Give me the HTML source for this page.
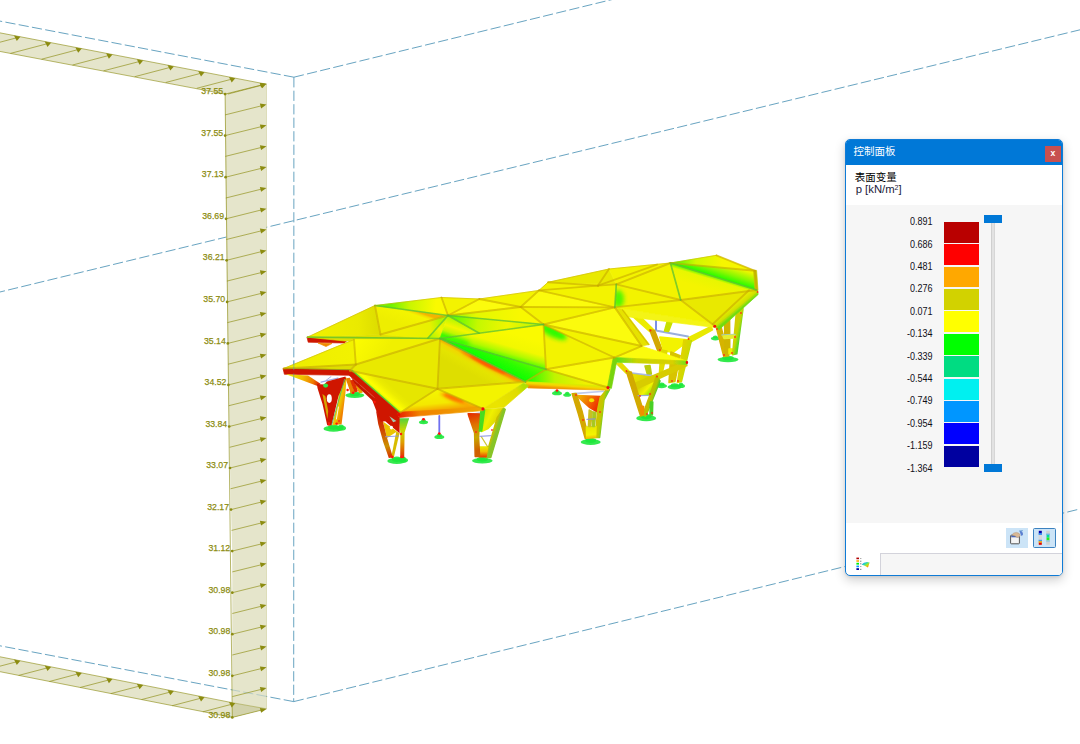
<!DOCTYPE html>
<html lang="zh-CN">
<head>
<meta charset="utf-8">
<title>控制面板</title>
<style>
html,body{margin:0;padding:0;background:#fff;}
body{width:1080px;height:744px;overflow:hidden;position:relative;font-family:"Liberation Sans","Noto Sans CJK SC",sans-serif;}
#scene{position:absolute;left:0;top:0;width:1080px;height:744px;display:block;}
#scene text{font-family:"Liberation Sans","Noto Sans CJK SC",sans-serif;}
#panel{position:absolute;left:845px;top:139px;width:216px;height:435px;border:1px solid #0f7bd6;border-radius:5px;background:#fff;box-shadow:0 4px 11px rgba(0,0,0,.20),0 1px 3px rgba(0,0,0,.08);overflow:hidden;}
#wrap{position:absolute;left:0;top:-1px;width:216px;height:436px;}
#title{position:absolute;left:0;top:0;width:216px;height:26px;background:#0078d7;color:#fff;font-size:10.5px;line-height:27px;}
#title span{position:absolute;left:7.5px;top:-1.2px;}
#close{position:absolute;left:199px;top:7px;width:16px;height:16px;background:#c75050;color:#fff;font-weight:bold;font-size:8.6px;line-height:15.4px;text-align:center;}
#head{position:absolute;left:8.8px;top:31.6px;font-size:10.5px;line-height:12.4px;color:#000;font-weight:400;}
#head .u{color:#1b1b3a;font-size:11.3px;font-weight:400;position:relative;left:0.9px;top:0.4px;}
#head sup{font-size:7px;line-height:0;vertical-align:3.5px;}
#gray{position:absolute;left:0;top:65.5px;width:216px;height:318.5px;background:#f6f6f6;}
.lab{position:absolute;left:20px;width:66.6px;text-align:right;font-size:11.4px;line-height:12px;color:#101018;transform:scaleX(0.79);transform-origin:100% 50%;}
.bar{position:absolute;left:98px;width:35px;height:20.9px;}
#track{position:absolute;left:145.2px;top:82px;width:3.6px;height:248px;background:#e2e2e2;border-left:0.6px solid #cfcfcf;border-right:0.6px solid #d6d6d6;box-sizing:border-box;}
.thumb{position:absolute;left:138.2px;width:18.3px;height:8.3px;background:#0078d7;}
.btn{position:absolute;top:389.3px;height:19.4px;background:#cce4f7;box-sizing:border-box;}
#tabbar{position:absolute;left:34.3px;top:413.5px;width:190px;height:30px;background:#f6f6f6;border:1px solid #d3d3db;box-sizing:border-box;}
</style>
</head>
<body>

<svg id="scene" width="1080" height="744" viewBox="0 0 1080 744">
<defs><filter id="soft" x="-5%" y="-5%" width="110%" height="110%"><feGaussianBlur stdDeviation="0.45"/></filter><filter id="b1_0" x="-30%" y="-200%" width="160%" height="500%"><feGaussianBlur stdDeviation="1.0"/></filter><filter id="b1_6" x="-30%" y="-200%" width="160%" height="500%"><feGaussianBlur stdDeviation="1.6"/></filter><filter id="b2_0" x="-30%" y="-200%" width="160%" height="500%"><feGaussianBlur stdDeviation="2.0"/></filter><filter id="b2_2" x="-30%" y="-200%" width="160%" height="500%"><feGaussianBlur stdDeviation="2.2"/></filter><linearGradient id="gl7" gradientUnits="userSpaceOnUse" x1="732.0" y1="330.0" x2="741.0" y2="332.0"><stop offset="0" stop-color="#d9c800"/><stop offset="0.6" stop-color="#c8d400"/><stop offset="1" stop-color="#58d820"/></linearGradient><linearGradient id="gl6" gradientUnits="userSpaceOnUse" x1="680.0" y1="360.0" x2="689.0" y2="362.0"><stop offset="0" stop-color="#e0d400"/><stop offset="0.7" stop-color="#cfd800"/><stop offset="1" stop-color="#70d820"/></linearGradient><linearGradient id="gl5" gradientUnits="userSpaceOnUse" x1="634.0" y1="378.0" x2="650.0" y2="392.0"><stop offset="0" stop-color="#e8e000"/><stop offset="0.5" stop-color="#d8d400"/><stop offset="0.8" stop-color="#f4f400"/><stop offset="1" stop-color="#a8e800"/></linearGradient><linearGradient id="gl5r" gradientUnits="userSpaceOnUse" x1="648.0" y1="398.0" x2="654.0" y2="400.0"><stop offset="0" stop-color="#c8b800"/><stop offset="0.6" stop-color="#b0c400"/><stop offset="1" stop-color="#50c828"/></linearGradient><linearGradient id="gl4g" gradientUnits="userSpaceOnUse" x1="580.0" y1="397.0" x2="598.0" y2="408.0"><stop offset="0" stop-color="#f0a800"/><stop offset="0.45" stop-color="#f07000"/><stop offset="1" stop-color="#ee2800"/></linearGradient><linearGradient id="gl4r" gradientUnits="userSpaceOnUse" x1="597.0" y1="415.0" x2="603.6" y2="416.0"><stop offset="0" stop-color="#d0c000"/><stop offset="0.6" stop-color="#c0c800"/><stop offset="1" stop-color="#78cc20"/></linearGradient><linearGradient id="gl4b" gradientUnits="userSpaceOnUse" x1="590.0" y1="427.0" x2="591.0" y2="438.0"><stop offset="0" stop-color="#e8e800"/><stop offset="0.7" stop-color="#f4f400"/><stop offset="1" stop-color="#f0c000"/></linearGradient><linearGradient id="gl3g" gradientUnits="userSpaceOnUse" x1="484.0" y1="412.0" x2="500.0" y2="420.0"><stop offset="0" stop-color="#d0e400"/><stop offset="0.4" stop-color="#f0f000"/><stop offset="1" stop-color="#d8d000"/></linearGradient><linearGradient id="gl3r" gradientUnits="userSpaceOnUse" x1="490.0" y1="430.0" x2="496.0" y2="432.0"><stop offset="0" stop-color="#d4b000"/><stop offset="0.55" stop-color="#c4c000"/><stop offset="1" stop-color="#88c428"/></linearGradient><linearGradient id="gl3b" gradientUnits="userSpaceOnUse" x1="483.0" y1="447.0" x2="483.0" y2="457.0"><stop offset="0" stop-color="#e8e800"/><stop offset="0.45" stop-color="#f0c000"/><stop offset="1" stop-color="#e84000"/></linearGradient><linearGradient id="gl3a" gradientUnits="userSpaceOnUse" x1="470.0" y1="414.0" x2="479.0" y2="450.0"><stop offset="0" stop-color="#e43000"/><stop offset="0.3" stop-color="#e07000"/><stop offset="0.65" stop-color="#c8a800"/><stop offset="1" stop-color="#d06000"/></linearGradient><linearGradient id="gU1" gradientUnits="userSpaceOnUse" x1="307.5" y1="337.2" x2="380.5" y2="334.5"><stop offset="0" stop-color="#f2f200"/><stop offset="0.7" stop-color="#eaea00"/><stop offset="1" stop-color="#dcdc00"/></linearGradient><linearGradient id="gU2" gradientUnits="userSpaceOnUse" x1="410.0" y1="309.0" x2="404.0" y2="326.0"><stop offset="0" stop-color="#f4b400"/><stop offset="0.1" stop-color="#f4dc00"/><stop offset="0.22" stop-color="#f4f400"/><stop offset="1" stop-color="#eeee00"/></linearGradient><linearGradient id="gU3" gradientUnits="userSpaceOnUse" x1="392.0" y1="300.0" x2="436.0" y2="304.0"><stop offset="0" stop-color="#70f400"/><stop offset="0.4" stop-color="#c8f600"/><stop offset="1" stop-color="#fafa00"/></linearGradient><linearGradient id="gU4" gradientUnits="userSpaceOnUse" x1="405.0" y1="330.0" x2="440.0" y2="322.0"><stop offset="0" stop-color="#f0f000"/><stop offset="0.7" stop-color="#e8f000"/><stop offset="1" stop-color="#b0f400"/></linearGradient><linearGradient id="gU4b" gradientUnits="userSpaceOnUse" x1="430.0" y1="335.0" x2="446.0" y2="320.0"><stop offset="0" stop-color="#b8f400"/><stop offset="0.5" stop-color="#f4f400"/><stop offset="1" stop-color="#d0f400"/></linearGradient><linearGradient id="gU7" gradientUnits="userSpaceOnUse" x1="452.0" y1="318.0" x2="520.0" y2="318.0"><stop offset="0" stop-color="#90f600"/><stop offset="0.35" stop-color="#e4f800"/><stop offset="1" stop-color="#f8f800"/></linearGradient><linearGradient id="gU8" gradientUnits="userSpaceOnUse" x1="456.0" y1="318.0" x2="530.0" y2="328.0"><stop offset="0" stop-color="#68fa00"/><stop offset="0.3" stop-color="#c4f800"/><stop offset="0.7" stop-color="#f0f600"/><stop offset="1" stop-color="#c8f600"/></linearGradient><linearGradient id="gU9" gradientUnits="userSpaceOnUse" x1="458.0" y1="320.0" x2="452.0" y2="338.0"><stop offset="0" stop-color="#b0f800"/><stop offset="0.45" stop-color="#f4f600"/><stop offset="0.75" stop-color="#c0f600"/><stop offset="1" stop-color="#40fa00"/></linearGradient><linearGradient id="gR1" gradientUnits="userSpaceOnUse" x1="674.0" y1="263.0" x2="722.0" y2="264.0"><stop offset="0" stop-color="#48f800"/><stop offset="0.45" stop-color="#d0f800"/><stop offset="1" stop-color="#f6f600"/></linearGradient><linearGradient id="gR2" gradientUnits="userSpaceOnUse" x1="720.0" y1="278.6" x2="724.6" y2="264.0"><stop offset="0" stop-color="#20fc00"/><stop offset="0.45" stop-color="#88f800"/><stop offset="1" stop-color="#f0f600"/></linearGradient><linearGradient id="gR3" gradientUnits="userSpaceOnUse" x1="720.0" y1="278.6" x2="716.0" y2="292.0"><stop offset="0" stop-color="#70f800"/><stop offset="0.22" stop-color="#e8f600"/><stop offset="1" stop-color="#f4f400"/></linearGradient><clipPath id="cp1"><polygon points="616.3,284.4 680.7,300.0 614.8,307.4"/></clipPath><linearGradient id="gRb" gradientUnits="userSpaceOnUse" x1="732.0" y1="306.0" x2="737.0" y2="312.0"><stop offset="0" stop-color="#e8ec00"/><stop offset="0.6" stop-color="#d0e000"/><stop offset="1" stop-color="#70dc10"/></linearGradient><linearGradient id="gMu" gradientUnits="userSpaceOnUse" x1="615.0" y1="360.0" x2="687.0" y2="362.0"><stop offset="0" stop-color="#50e020"/><stop offset="0.3" stop-color="#c8d400"/><stop offset="0.8" stop-color="#d8d000"/><stop offset="1" stop-color="#70e020"/></linearGradient><linearGradient id="gG1" gradientUnits="userSpaceOnUse" x1="490.0" y1="353.0" x2="497.0" y2="329.0"><stop offset="0" stop-color="#58fc00"/><stop offset="0.2" stop-color="#b0fa00"/><stop offset="0.48" stop-color="#f2f800"/><stop offset="1" stop-color="#fafa00"/></linearGradient><clipPath id="cp2"><polygon points="440.0,338.5 543.5,324.5 546.0,369.3"/></clipPath><linearGradient id="gG2" gradientUnits="userSpaceOnUse" x1="497.0" y1="368.0" x2="505.0" y2="352.0"><stop offset="0" stop-color="#08ff00"/><stop offset="0.6" stop-color="#30fd00"/><stop offset="1" stop-color="#58fb00"/></linearGradient><clipPath id="cp3"><polygon points="543.5,324.5 614.3,357.5 546.0,369.3"/></clipPath><linearGradient id="gG5" gradientUnits="userSpaceOnUse" x1="530.0" y1="380.0" x2="585.0" y2="378.0"><stop offset="0" stop-color="#30fa00"/><stop offset="0.45" stop-color="#c0f400"/><stop offset="1" stop-color="#f0f000"/></linearGradient><linearGradient id="gGf" gradientUnits="userSpaceOnUse" x1="560.0" y1="383.0" x2="559.6" y2="388.6"><stop offset="0" stop-color="#d8ec00"/><stop offset="0.45" stop-color="#f4d800"/><stop offset="1" stop-color="#f09000"/></linearGradient><linearGradient id="gF1" gradientUnits="userSpaceOnUse" x1="300.0" y1="362.0" x2="352.0" y2="352.0"><stop offset="0" stop-color="#eeee00"/><stop offset="1" stop-color="#f2f200"/></linearGradient><linearGradient id="gF3" gradientUnits="userSpaceOnUse" x1="354.0" y1="342.0" x2="380.0" y2="360.0"><stop offset="0" stop-color="#fcfc00"/><stop offset="1" stop-color="#f0f000"/></linearGradient><linearGradient id="gF5" gradientUnits="userSpaceOnUse" x1="490.0" y1="365.0" x2="482.0" y2="380.0"><stop offset="0" stop-color="#f0a000"/><stop offset="0.22" stop-color="#f0d800"/><stop offset="0.5" stop-color="#e4e400"/><stop offset="1" stop-color="#dede00"/></linearGradient><clipPath id="cp4"><polygon points="440.0,338.5 525.5,381.8 437.5,388.8"/></clipPath><clipPath id="cp5"><polygon points="440.0,338.5 525.5,381.8 437.5,388.8"/></clipPath><linearGradient id="gF7" gradientUnits="userSpaceOnUse" x1="440.0" y1="392.0" x2="442.0" y2="412.0"><stop offset="0" stop-color="#f4f400"/><stop offset="0.55" stop-color="#f4e800"/><stop offset="1" stop-color="#f49000"/></linearGradient><linearGradient id="gF8" gradientUnits="userSpaceOnUse" x1="374.0" y1="392.0" x2="384.5" y2="380.0"><stop offset="0" stop-color="#58ec00"/><stop offset="0.1" stop-color="#d0fa00"/><stop offset="0.3" stop-color="#ffff00"/><stop offset="0.7" stop-color="#ecec00"/><stop offset="1" stop-color="#e6e600"/></linearGradient><clipPath id="cp6"><polygon points="483.0,408.8 398.0,414.0 437.5,388.8"/></clipPath><clipPath id="cp7"><polygon points="483.0,408.8 398.0,414.0 437.5,388.8"/></clipPath><linearGradient id="gFu" gradientUnits="userSpaceOnUse" x1="495.0" y1="400.0" x2="522.0" y2="384.0"><stop offset="0" stop-color="#eae400"/><stop offset="0.75" stop-color="#e0dc00"/><stop offset="1" stop-color="#b0e000"/></linearGradient><linearGradient id="gFf" gradientUnits="userSpaceOnUse" x1="398.0" y1="414.0" x2="483.0" y2="409.0"><stop offset="0" stop-color="#e82000"/><stop offset="0.25" stop-color="#f08000"/><stop offset="1" stop-color="#f0a800"/></linearGradient><linearGradient id="gl1w" gradientUnits="userSpaceOnUse" x1="288.0" y1="375.0" x2="319.0" y2="385.0"><stop offset="0" stop-color="#ecec00"/><stop offset="0.45" stop-color="#f0c000"/><stop offset="0.8" stop-color="#f07800"/><stop offset="1" stop-color="#d82000"/></linearGradient><linearGradient id="gl1b" gradientUnits="userSpaceOnUse" x1="334.0" y1="400.0" x2="345.0" y2="403.0"><stop offset="0" stop-color="#40c060"/><stop offset="0.3" stop-color="#d8e000"/><stop offset="0.6" stop-color="#f0c000"/><stop offset="1" stop-color="#f08000"/></linearGradient><linearGradient id="gl2b" gradientUnits="userSpaceOnUse" x1="402.0" y1="418.0" x2="402.0" y2="458.0"><stop offset="0" stop-color="#50d040"/><stop offset="0.3" stop-color="#c8d800"/><stop offset="0.6" stop-color="#e0a000"/><stop offset="1" stop-color="#e03000"/></linearGradient><linearGradient id="gl2a" gradientUnits="userSpaceOnUse" x1="380.0" y1="412.0" x2="391.0" y2="457.0"><stop offset="0" stop-color="#cf1800"/><stop offset="0.4" stop-color="#d04800"/><stop offset="0.75" stop-color="#cc9000"/><stop offset="1" stop-color="#d83000"/></linearGradient></defs>
<g id="boxlines"><line x1="293.9" y1="77.2" x2="-10.0" y2="19.2" stroke="#4f95b7" stroke-width="1.0" stroke-dasharray="10.2 3.3" opacity="0.85"/><line x1="293.9" y1="77.2" x2="620.0" y2="-2.4" stroke="#4f95b7" stroke-width="1.0" stroke-dasharray="10.2 3.3" opacity="0.85"/><line x1="293.9" y1="77.2" x2="293.7" y2="701.6" stroke="#4f95b7" stroke-width="1.0" stroke-dasharray="10.2 3.3" opacity="0.85"/><line x1="293.7" y1="701.6" x2="-10.0" y2="643.9" stroke="#4f95b7" stroke-width="1.0" stroke-dasharray="10.2 3.3" opacity="0.85"/><line x1="293.7" y1="701.6" x2="1090.0" y2="506.5" stroke="#4f95b7" stroke-width="1.0" stroke-dasharray="10.2 3.3" opacity="0.85"/><line x1="-5.0" y1="293.2" x2="1085.0" y2="28.6" stroke="#4f95b7" stroke-width="1.0" stroke-dasharray="10.2 3.3" opacity="0.85"/></g>
<g id="load"><polygon points="225.1,94.1 225.1,135.6 225.6,177.2 226.0,218.8 226.6,260.3 227.1,301.9 227.8,343.4 228.4,384.9 229.2,426.5 230.0,468.0 231.0,509.6 232.2,551.1 232.3,592.7 232.3,634.2 232.3,675.8 232.3,717.4 266.5,708.9 266.5,667.3 266.5,625.8 266.5,584.2 266.5,542.6 266.5,500.8 266.5,459.0 266.5,417.2 266.5,375.5 266.5,333.8 266.5,292.1 266.5,250.4 266.5,208.7 266.5,167.0 266.5,125.3 266.5,83.8" fill="#e5e5cb" stroke="none"/><polygon points="-5.0,31.9 266.5,84.2 225.1,94.1 -5.0,50.5" fill="#e5e5cb"/><polygon points="-5.0,655.8 232.2,702.7 266.5,708.8 232.2,717.4 -5.0,670.7" fill="#e5e5cb"/><polygon points="232.2,702.7 266.5,708.8 232.2,717.4" fill="#d2d2ab"/></g>
<line x1="266.5" y1="696.4" x2="232.2" y2="689.9" stroke="#4f95b7" stroke-width="1.0" stroke-dasharray="10.2 3.3" opacity="0.30"/>
<g id="loadlines"><line x1="225.1" y1="94.1" x2="232.3" y2="717.4" stroke="#8c8c10" stroke-width="1.00" opacity="0.62"/><line x1="266.5" y1="83.8" x2="266.5" y2="708.9" stroke="#8c8c10" stroke-width="1.00" opacity="0.20"/><line x1="-5.0" y1="31.9" x2="266.5" y2="84.2" stroke="#8c8c10" stroke-width="0.80" opacity="0.75"/><line x1="-5.0" y1="50.5" x2="225.1" y2="94.1" stroke="#8c8c10" stroke-width="0.80" opacity="0.75"/><line x1="-5.0" y1="655.8" x2="232.2" y2="702.7" stroke="#8c8c10" stroke-width="0.80" opacity="0.75"/><line x1="232.2" y1="702.7" x2="266.5" y2="708.8" stroke="#8c8c10" stroke-width="0.80" opacity="0.50"/><line x1="-5.0" y1="670.7" x2="232.2" y2="717.4" stroke="#8c8c10" stroke-width="0.80" opacity="0.75"/><line x1="225.1" y1="94.1" x2="263.5" y2="84.5" stroke="#8c8c10" stroke-width="0.85" opacity="0.75"/><polygon points="266.5,83.8 261.1,87.7 259.9,82.9" fill="#8c8c10"/><circle cx="225.1" cy="94.1" r="1.35" fill="#8c8c10"/><line x1="225.1" y1="114.9" x2="263.5" y2="105.3" stroke="#8c8c10" stroke-width="0.85" opacity="0.75"/><polygon points="266.5,104.6 261.1,108.5 259.9,103.6" fill="#8c8c10"/><line x1="225.1" y1="135.6" x2="263.5" y2="126.1" stroke="#8c8c10" stroke-width="0.85" opacity="0.75"/><polygon points="266.5,125.3 261.1,129.3 259.9,124.4" fill="#8c8c10"/><circle cx="225.1" cy="135.6" r="1.35" fill="#8c8c10"/><line x1="225.3" y1="156.4" x2="263.5" y2="146.9" stroke="#8c8c10" stroke-width="0.85" opacity="0.75"/><polygon points="266.5,146.2 261.1,150.1 259.9,145.3" fill="#8c8c10"/><line x1="225.6" y1="177.2" x2="263.5" y2="167.8" stroke="#8c8c10" stroke-width="0.85" opacity="0.75"/><polygon points="266.5,167.0 261.1,170.9 259.9,166.1" fill="#8c8c10"/><circle cx="225.6" cy="177.2" r="1.35" fill="#8c8c10"/><line x1="225.8" y1="198.0" x2="263.5" y2="188.6" stroke="#8c8c10" stroke-width="0.85" opacity="0.75"/><polygon points="266.5,187.9 261.1,191.8 259.9,186.9" fill="#8c8c10"/><line x1="226.0" y1="218.8" x2="263.5" y2="209.4" stroke="#8c8c10" stroke-width="0.85" opacity="0.75"/><polygon points="266.5,208.7 261.1,212.6 259.9,207.8" fill="#8c8c10"/><circle cx="226.0" cy="218.8" r="1.35" fill="#8c8c10"/><line x1="226.3" y1="239.5" x2="263.5" y2="230.3" stroke="#8c8c10" stroke-width="0.85" opacity="0.75"/><polygon points="266.5,229.5 261.1,233.4 259.9,228.6" fill="#8c8c10"/><line x1="226.6" y1="260.3" x2="263.5" y2="251.1" stroke="#8c8c10" stroke-width="0.85" opacity="0.75"/><polygon points="266.5,250.4 261.1,254.3 259.9,249.4" fill="#8c8c10"/><circle cx="226.6" cy="260.3" r="1.35" fill="#8c8c10"/><line x1="226.9" y1="281.1" x2="263.5" y2="272.0" stroke="#8c8c10" stroke-width="0.85" opacity="0.75"/><polygon points="266.5,271.2 261.1,275.1 259.9,270.3" fill="#8c8c10"/><line x1="227.1" y1="301.9" x2="263.5" y2="292.8" stroke="#8c8c10" stroke-width="0.85" opacity="0.75"/><polygon points="266.5,292.1 261.1,296.0 259.9,291.1" fill="#8c8c10"/><circle cx="227.1" cy="301.9" r="1.35" fill="#8c8c10"/><line x1="227.4" y1="322.6" x2="263.5" y2="313.7" stroke="#8c8c10" stroke-width="0.85" opacity="0.75"/><polygon points="266.5,312.9 261.1,316.8 259.9,312.0" fill="#8c8c10"/><line x1="227.8" y1="343.4" x2="263.5" y2="334.5" stroke="#8c8c10" stroke-width="0.85" opacity="0.75"/><polygon points="266.5,333.8 261.1,337.7 259.9,332.8" fill="#8c8c10"/><circle cx="227.8" cy="343.4" r="1.35" fill="#8c8c10"/><line x1="228.1" y1="364.2" x2="263.5" y2="355.4" stroke="#8c8c10" stroke-width="0.85" opacity="0.75"/><polygon points="266.5,354.6 261.1,358.5 259.9,353.7" fill="#8c8c10"/><line x1="228.4" y1="384.9" x2="263.5" y2="376.2" stroke="#8c8c10" stroke-width="0.85" opacity="0.75"/><polygon points="266.5,375.5 261.1,379.4 259.9,374.6" fill="#8c8c10"/><circle cx="228.4" cy="384.9" r="1.35" fill="#8c8c10"/><line x1="228.8" y1="405.7" x2="263.5" y2="397.1" stroke="#8c8c10" stroke-width="0.85" opacity="0.75"/><polygon points="266.5,396.3 261.1,400.3 259.9,395.4" fill="#8c8c10"/><line x1="229.2" y1="426.5" x2="263.5" y2="418.0" stroke="#8c8c10" stroke-width="0.85" opacity="0.75"/><polygon points="266.5,417.2 261.1,421.1 259.9,416.3" fill="#8c8c10"/><circle cx="229.2" cy="426.5" r="1.35" fill="#8c8c10"/><line x1="229.6" y1="447.3" x2="263.5" y2="438.8" stroke="#8c8c10" stroke-width="0.85" opacity="0.75"/><polygon points="266.5,438.1 261.1,442.0 259.9,437.2" fill="#8c8c10"/><line x1="230.0" y1="468.0" x2="263.5" y2="459.7" stroke="#8c8c10" stroke-width="0.85" opacity="0.75"/><polygon points="266.5,459.0 261.1,462.9 259.9,458.0" fill="#8c8c10"/><circle cx="230.0" cy="468.0" r="1.35" fill="#8c8c10"/><line x1="230.5" y1="488.8" x2="263.5" y2="480.6" stroke="#8c8c10" stroke-width="0.85" opacity="0.75"/><polygon points="266.5,479.9 261.1,483.8 259.9,478.9" fill="#8c8c10"/><line x1="231.0" y1="509.6" x2="263.5" y2="501.5" stroke="#8c8c10" stroke-width="0.85" opacity="0.75"/><polygon points="266.5,500.8 261.1,504.7 259.9,499.8" fill="#8c8c10"/><circle cx="231.0" cy="509.6" r="1.35" fill="#8c8c10"/><line x1="231.6" y1="530.4" x2="263.5" y2="522.4" stroke="#8c8c10" stroke-width="0.85" opacity="0.75"/><polygon points="266.5,521.7 261.1,525.6 259.9,520.8" fill="#8c8c10"/><line x1="232.2" y1="551.1" x2="263.5" y2="543.4" stroke="#8c8c10" stroke-width="0.85" opacity="0.75"/><polygon points="266.5,542.6 261.1,546.5 259.9,541.7" fill="#8c8c10"/><circle cx="232.2" cy="551.1" r="1.35" fill="#8c8c10"/><line x1="232.3" y1="571.9" x2="263.5" y2="564.2" stroke="#8c8c10" stroke-width="0.85" opacity="0.75"/><polygon points="266.5,563.4 261.1,567.3 259.9,562.5" fill="#8c8c10"/><line x1="232.3" y1="592.7" x2="263.5" y2="584.9" stroke="#8c8c10" stroke-width="0.85" opacity="0.75"/><polygon points="266.5,584.2 261.1,588.1 259.9,583.3" fill="#8c8c10"/><circle cx="232.3" cy="592.7" r="1.35" fill="#8c8c10"/><line x1="232.3" y1="613.5" x2="263.5" y2="605.7" stroke="#8c8c10" stroke-width="0.85" opacity="0.75"/><polygon points="266.5,605.0 261.1,608.9 259.9,604.0" fill="#8c8c10"/><line x1="232.3" y1="634.2" x2="263.5" y2="626.5" stroke="#8c8c10" stroke-width="0.85" opacity="0.75"/><polygon points="266.5,625.8 261.1,629.7 259.9,624.8" fill="#8c8c10"/><circle cx="232.3" cy="634.2" r="1.35" fill="#8c8c10"/><line x1="232.3" y1="655.0" x2="263.5" y2="647.3" stroke="#8c8c10" stroke-width="0.85" opacity="0.75"/><polygon points="266.5,646.5 261.1,650.5 259.9,645.6" fill="#8c8c10"/><line x1="232.3" y1="675.8" x2="263.5" y2="668.0" stroke="#8c8c10" stroke-width="0.85" opacity="0.75"/><polygon points="266.5,667.3 261.1,671.2 259.9,666.4" fill="#8c8c10"/><circle cx="232.3" cy="675.8" r="1.35" fill="#8c8c10"/><line x1="232.3" y1="696.6" x2="263.5" y2="688.8" stroke="#8c8c10" stroke-width="0.85" opacity="0.75"/><polygon points="266.5,688.1 261.1,692.0 259.9,687.1" fill="#8c8c10"/><line x1="232.3" y1="717.4" x2="263.5" y2="709.6" stroke="#8c8c10" stroke-width="0.85" opacity="0.75"/><polygon points="266.5,708.9 261.1,712.8 259.9,707.9" fill="#8c8c10"/><circle cx="232.3" cy="717.4" r="1.35" fill="#8c8c10"/><line x1="-51.6" y1="41.7" x2="-13.3" y2="31.7" stroke="#8c8c10" stroke-width="0.80" opacity="0.80"/><polygon points="-10.3,30.9 -16.7,29.7 -13.9,35.1" fill="#8c8c10"/><line x1="-20.5" y1="47.6" x2="17.4" y2="37.6" stroke="#8c8c10" stroke-width="0.80" opacity="0.80"/><polygon points="20.4,36.8 14.0,35.6 16.8,41.0" fill="#8c8c10"/><line x1="10.5" y1="53.4" x2="48.1" y2="43.5" stroke="#8c8c10" stroke-width="0.80" opacity="0.80"/><polygon points="51.1,42.7 44.7,41.5 47.5,46.9" fill="#8c8c10"/><line x1="41.6" y1="59.2" x2="78.8" y2="49.4" stroke="#8c8c10" stroke-width="0.80" opacity="0.80"/><polygon points="81.8,48.6 75.4,47.4 78.2,52.8" fill="#8c8c10"/><line x1="72.6" y1="65.0" x2="109.5" y2="55.3" stroke="#8c8c10" stroke-width="0.80" opacity="0.80"/><polygon points="112.5,54.6 106.1,53.3 108.9,58.8" fill="#8c8c10"/><line x1="103.6" y1="70.8" x2="140.2" y2="61.3" stroke="#8c8c10" stroke-width="0.80" opacity="0.80"/><polygon points="143.2,60.5 136.8,59.2 139.6,64.7" fill="#8c8c10"/><line x1="134.7" y1="76.7" x2="170.9" y2="67.2" stroke="#8c8c10" stroke-width="0.80" opacity="0.80"/><polygon points="173.9,66.4 167.5,65.1 170.3,70.6" fill="#8c8c10"/><line x1="165.7" y1="82.5" x2="201.6" y2="73.1" stroke="#8c8c10" stroke-width="0.80" opacity="0.80"/><polygon points="204.6,72.3 198.2,71.0 201.0,76.5" fill="#8c8c10"/><line x1="196.8" y1="88.3" x2="232.3" y2="79.0" stroke="#8c8c10" stroke-width="0.80" opacity="0.80"/><polygon points="235.3,78.2 228.9,76.9 231.7,82.4" fill="#8c8c10"/><line x1="227.8" y1="94.1" x2="263.0" y2="84.9" stroke="#8c8c10" stroke-width="0.80" opacity="0.80"/><polygon points="266.0,84.1 259.6,82.9 262.4,88.3" fill="#8c8c10"/><line x1="-42.7" y1="663.3" x2="-13.3" y2="655.6" stroke="#8c8c10" stroke-width="0.80" opacity="0.80"/><polygon points="-10.3,654.8 -16.7,653.5 -13.9,659.0" fill="#8c8c10"/><line x1="-12.0" y1="669.3" x2="17.4" y2="661.6" stroke="#8c8c10" stroke-width="0.80" opacity="0.80"/><polygon points="20.4,660.8 14.0,659.6 16.8,665.0" fill="#8c8c10"/><line x1="18.7" y1="675.4" x2="48.1" y2="667.7" stroke="#8c8c10" stroke-width="0.80" opacity="0.80"/><polygon points="51.1,666.9 44.7,665.6 47.5,671.1" fill="#8c8c10"/><line x1="49.4" y1="681.5" x2="78.8" y2="673.7" stroke="#8c8c10" stroke-width="0.80" opacity="0.80"/><polygon points="81.8,673.0 75.4,671.7 78.2,677.2" fill="#8c8c10"/><line x1="80.1" y1="687.5" x2="109.5" y2="679.8" stroke="#8c8c10" stroke-width="0.80" opacity="0.80"/><polygon points="112.5,679.0 106.1,677.8 108.9,683.2" fill="#8c8c10"/><line x1="110.8" y1="693.6" x2="140.2" y2="685.9" stroke="#8c8c10" stroke-width="0.80" opacity="0.80"/><polygon points="143.2,685.1 136.8,683.8 139.6,689.3" fill="#8c8c10"/><line x1="141.5" y1="699.6" x2="170.9" y2="691.9" stroke="#8c8c10" stroke-width="0.80" opacity="0.80"/><polygon points="173.9,691.1 167.5,689.9 170.3,695.3" fill="#8c8c10"/><line x1="172.2" y1="705.7" x2="201.6" y2="698.0" stroke="#8c8c10" stroke-width="0.80" opacity="0.80"/><polygon points="204.6,697.2 198.2,696.0 201.0,701.4" fill="#8c8c10"/><line x1="202.9" y1="711.8" x2="232.3" y2="704.1" stroke="#8c8c10" stroke-width="0.80" opacity="0.80"/><polygon points="235.3,703.3 228.9,702.0 231.7,707.5" fill="#8c8c10"/></g>
<g id="loadlabels" font-size="9.9" fill="#8c8c10" stroke="#8c8c10" stroke-width="0.25"><text x="201.3" y="94.2" textLength="21.8" lengthAdjust="spacingAndGlyphs">37.55</text><text x="201.3" y="135.7" textLength="21.8" lengthAdjust="spacingAndGlyphs">37.55</text><text x="201.8" y="177.3" textLength="21.8" lengthAdjust="spacingAndGlyphs">37.13</text><text x="202.2" y="218.8" textLength="21.8" lengthAdjust="spacingAndGlyphs">36.69</text><text x="202.8" y="260.4" textLength="21.8" lengthAdjust="spacingAndGlyphs">36.21</text><text x="203.3" y="302.0" textLength="21.8" lengthAdjust="spacingAndGlyphs">35.70</text><text x="204.0" y="343.5" textLength="21.8" lengthAdjust="spacingAndGlyphs">35.14</text><text x="204.6" y="385.0" textLength="21.8" lengthAdjust="spacingAndGlyphs">34.52</text><text x="205.4" y="426.6" textLength="21.8" lengthAdjust="spacingAndGlyphs">33.84</text><text x="206.2" y="468.1" textLength="21.8" lengthAdjust="spacingAndGlyphs">33.07</text><text x="207.2" y="509.7" textLength="21.8" lengthAdjust="spacingAndGlyphs">32.17</text><text x="208.4" y="551.2" textLength="21.8" lengthAdjust="spacingAndGlyphs">31.12</text><text x="208.5" y="592.8" textLength="21.8" lengthAdjust="spacingAndGlyphs">30.98</text><text x="208.5" y="634.4" textLength="21.8" lengthAdjust="spacingAndGlyphs">30.98</text><text x="208.5" y="675.9" textLength="21.8" lengthAdjust="spacingAndGlyphs">30.98</text><text x="208.5" y="717.5" textLength="21.8" lengthAdjust="spacingAndGlyphs">30.98</text></g>
<g id="model" filter="url(#soft)"><ellipse cx="728.0" cy="359.6" rx="10.5" ry="2.6" fill="#1fe83c" opacity="0.90"/><ellipse cx="728.0" cy="358.0" rx="5.8" ry="2.3" fill="#1fe83c" opacity="0.90"/><ellipse cx="715.4" cy="338.6" rx="4.5" ry="1.8" fill="#1fe83c" opacity="0.90"/><ellipse cx="715.4" cy="337.0" rx="2.5" ry="1.6" fill="#1fe83c" opacity="0.90"/><polygon points="716.4,327.8 721.0,326.9 728.8,355.7 723.8,356.6" fill="#d6b400" stroke="#d6b400" stroke-width="1.5" stroke-linejoin="round"/><polygon points="724.6,322.3 729.6,318.4 729.8,353.8 725.0,353.8" fill="#d0b400" stroke="#d0b400" stroke-width="1.5" stroke-linejoin="round"/><polygon points="729.0,349.0 734.0,349.0 733.6,353.8 729.0,353.8" fill="#f0f000" stroke="#f0f000" stroke-width="1.5" stroke-linejoin="round"/><polygon points="736.6,309.5 743.0,308.6 736.8,353.8 732.6,354.7" fill="url(#gl7)" stroke="url(#gl7)" stroke-width="1.5" stroke-linejoin="round"/><line x1="722.0" y1="335.0" x2="735.0" y2="334.5" stroke="#9fd0c0" stroke-width="1.60" opacity="0.90" stroke-linecap="round"/><polygon points="723.0,336.0 734.0,335.3 733.5,338.0 724.0,338.6" fill="#e6ee30" stroke="#e6ee30" stroke-width="1.5" stroke-linejoin="round"/><ellipse cx="661.6" cy="386.0" rx="5.5" ry="2.2" fill="#1fe83c" opacity="0.90"/><ellipse cx="661.6" cy="384.4" rx="3.0" ry="2.0" fill="#1fe83c" opacity="0.90"/><ellipse cx="674.6" cy="387.0" rx="7.0" ry="2.4" fill="#1fe83c" opacity="0.90"/><ellipse cx="674.6" cy="385.4" rx="3.9" ry="2.2" fill="#1fe83c" opacity="0.90"/><ellipse cx="681.0" cy="386.0" rx="4.0" ry="2.0" fill="#1fe83c" opacity="0.90"/><ellipse cx="681.0" cy="384.4" rx="2.2" ry="1.8" fill="#1fe83c" opacity="0.90"/><line x1="656.0" y1="320.5" x2="656.0" y2="330.0" stroke="#5a78e0" stroke-width="1.80" opacity="0.90" stroke-linecap="round"/><line x1="657.0" y1="330.8" x2="688.0" y2="336.5" stroke="#8fa6d8" stroke-width="2.00" opacity="0.90" stroke-linecap="round"/><polygon points="627.0,311.5 634.0,310.5 654.5,330.6 649.6,331.4" fill="#ecec00" stroke="#ecec00" stroke-width="1.5" stroke-linejoin="round"/><polygon points="649.6,329.7 654.6,330.6 663.0,352.0 658.6,352.9" fill="#d4a800" stroke="#d4a800" stroke-width="1.5" stroke-linejoin="round"/><polygon points="667.0,322.0 672.0,322.5 668.6,331.5 664.5,331.0" fill="#c8e000" stroke="#c8e000" stroke-width="1.5" stroke-linejoin="round"/><polygon points="659.8,337.1 689.5,339.9 672.8,352.6 663.5,350.5" fill="#f3f300" stroke="#f3f300" stroke-width="1.5" stroke-linejoin="round"/><polygon points="688.5,337.6 711.0,326.5 712.5,329.8 690.4,342.0" fill="#e9e900" stroke="#e9e900" stroke-width="1.5" stroke-linejoin="round"/><polygon points="683.9,339.9 691.3,340.8 681.4,381.6 677.4,382.6" fill="url(#gl6)" stroke="url(#gl6)" stroke-width="1.5" stroke-linejoin="round"/><polygon points="670.9,352.0 680.2,355.7 674.9,381.6 669.0,382.6" fill="#d8c400" stroke="#d8c400" stroke-width="1.5" stroke-linejoin="round"/><polygon points="661.0,350.0 667.0,351.0 662.5,372.0 659.5,372.0" fill="#e0dc00" stroke="#e0dc00" stroke-width="1.5" stroke-linejoin="round"/><ellipse cx="646.2" cy="418.2" rx="10.0" ry="3.0" fill="#1fe83c" opacity="0.90"/><ellipse cx="646.2" cy="416.6" rx="5.5" ry="2.7" fill="#1fe83c" opacity="0.90"/><polygon points="616.5,363.5 621.0,362.8 629.4,371.6 626.2,373.2" fill="#e8dc00" stroke="#e8dc00" stroke-width="1.5" stroke-linejoin="round"/><polygon points="645.0,366.0 650.0,365.6 651.4,374.0 647.4,374.6" fill="#b8cc10" stroke="#b8cc10" stroke-width="1.5" stroke-linejoin="round"/><polygon points="629.4,373.6 656.0,377.4 650.4,394.6 636.8,395.2" fill="url(#gl5)" stroke="url(#gl5)" stroke-width="1.5" stroke-linejoin="round"/><line x1="630.0" y1="372.8" x2="652.0" y2="375.6" stroke="#9aaee0" stroke-width="1.60" opacity="0.85" stroke-linecap="round"/><polygon points="633.4,384.0 683.9,362.6 686.9,365.6 635.4,389.6" fill="#d8cc00" stroke="#d8cc00" stroke-width="1.5" stroke-linejoin="round"/><polygon points="626.4,371.6 631.2,372.0 644.6,414.8 640.6,416.0" fill="#d2aa00" stroke="#d2aa00" stroke-width="1.5" stroke-linejoin="round"/><polygon points="656.4,376.0 660.0,381.0 651.6,402.0 645.8,416.0 642.6,415.0 650.8,392.8" fill="url(#gl5r)" stroke="url(#gl5r)" stroke-width="1.5" stroke-linejoin="round"/><polygon points="650.4,402.0 652.8,402.0 652.4,415.0 650.0,415.0" fill="#48d028" stroke="#48d028" stroke-width="1.5" stroke-linejoin="round"/><polygon points="640.2,406.0 643.6,406.6 643.4,414.6 641.2,414.6" fill="#f09000" stroke="#f09000" stroke-width="1.5" stroke-linejoin="round"/><line x1="638.0" y1="395.6" x2="648.5" y2="395.4" stroke="#8fa6d8" stroke-width="1.30" opacity="0.90" stroke-linecap="round"/><ellipse cx="590.7" cy="442.0" rx="10.0" ry="3.0" fill="#1fe83c" opacity="0.90"/><ellipse cx="590.7" cy="440.4" rx="5.5" ry="2.7" fill="#1fe83c" opacity="0.90"/><line x1="574.0" y1="393.6" x2="604.0" y2="391.2" stroke="#b8c4e8" stroke-width="1.60" opacity="0.90" stroke-linecap="round"/><polygon points="576.6,395.6 600.4,396.6 596.6,411.5 589.8,407.6" fill="url(#gl4g)" stroke="url(#gl4g)" stroke-width="1.5" stroke-linejoin="round"/><ellipse cx="591.6" cy="400.2" rx="2.6" ry="2.0" fill="#f4f000" opacity="0.90"/><polygon points="572.2,393.8 576.2,393.4 582.0,411.0 588.6,437.6 585.2,438.4 578.4,414.0" fill="#d4a800" stroke="#d4a800" stroke-width="1.5" stroke-linejoin="round"/><polygon points="600.2,397.5 607.6,388.6 609.6,389.4 604.0,400.0 599.6,437.4 595.4,437.6 597.6,410.0" fill="url(#gl4r)" stroke="url(#gl4r)" stroke-width="1.5" stroke-linejoin="round"/><polygon points="586.4,427.0 596.0,426.4 595.6,437.6 586.6,438.2" fill="url(#gl4b)" stroke="url(#gl4b)" stroke-width="1.5" stroke-linejoin="round"/><polygon points="589.2,410.0 592.2,411.6 590.6,426.6 588.4,426.6" fill="#c8c020" stroke="#c8c020" stroke-width="1.5" stroke-linejoin="round"/><polygon points="593.2,412.0 595.8,412.6 594.4,426.6 592.4,426.6" fill="#a8c820" stroke="#a8c820" stroke-width="1.5" stroke-linejoin="round"/><line x1="587.0" y1="419.4" x2="595.0" y2="418.8" stroke="#8890e0" stroke-width="1.20" opacity="0.85" stroke-linecap="round"/><ellipse cx="482.3" cy="460.8" rx="10.3" ry="2.8" fill="#1fe83c" opacity="0.90"/><ellipse cx="482.3" cy="459.2" rx="5.7" ry="2.5" fill="#1fe83c" opacity="0.90"/><line x1="471.0" y1="414.6" x2="500.0" y2="409.4" stroke="#b8c4e8" stroke-width="1.60" opacity="0.90" stroke-linecap="round"/><polygon points="483.0,409.5 503.6,408.8 497.5,418.5 488.0,428.5 481.5,431.5" fill="url(#gl3g)" stroke="url(#gl3g)" stroke-width="1.5" stroke-linejoin="round"/><polygon points="497.2,417.6 503.4,408.4 505.2,409.4 490.8,457.4 485.6,457.4" fill="url(#gl3r)" stroke="url(#gl3r)" stroke-width="1.5" stroke-linejoin="round"/><polygon points="479.5,447.0 487.6,447.0 486.0,456.8 479.5,456.8" fill="url(#gl3b)" stroke="url(#gl3b)" stroke-width="1.5" stroke-linejoin="round"/><polygon points="468.2,413.8 479.6,414.0 478.6,437.6 479.6,456.6 475.2,456.6 474.6,433.0 468.6,415.4" fill="url(#gl3a)" stroke="url(#gl3a)" stroke-width="1.5" stroke-linejoin="round"/><polygon points="481.0,409.6 484.6,410.0 481.7,431.0 479.4,431.0" fill="#48dc20" stroke="#48dc20" stroke-width="1.5" stroke-linejoin="round"/><line x1="481.5" y1="437.0" x2="487.5" y2="446.5" stroke="#c8c020" stroke-width="1.30" opacity="0.90" stroke-linecap="round"/><line x1="480.0" y1="436.4" x2="491.0" y2="435.6" stroke="#8890e0" stroke-width="1.10" opacity="0.80" stroke-linecap="round"/><line x1="439.3" y1="416.0" x2="439.3" y2="432.0" stroke="#6a6af0" stroke-width="1.80" opacity="0.95" stroke-linecap="round"/><ellipse cx="439.3" cy="437.0" rx="5.0" ry="2.0" fill="#1fe83c" opacity="0.90"/><ellipse cx="439.3" cy="435.4" rx="2.8" ry="1.8" fill="#1fe83c" opacity="0.90"/><ellipse cx="439.3" cy="433.6" rx="1.4" ry="1.4" fill="#ff1010" opacity="1.00"/><ellipse cx="423.5" cy="422.3" rx="4.6" ry="1.9" fill="#1fe83c" opacity="0.90"/><ellipse cx="423.5" cy="420.7" rx="2.5" ry="1.7" fill="#1fe83c" opacity="0.90"/><ellipse cx="423.5" cy="419.3" rx="1.5" ry="1.3" fill="#ff1010" opacity="1.00"/><ellipse cx="557.0" cy="393.3" rx="5.0" ry="2.0" fill="#1fe83c" opacity="0.90"/><ellipse cx="557.0" cy="391.7" rx="2.8" ry="1.8" fill="#1fe83c" opacity="0.90"/><ellipse cx="557.0" cy="390.5" rx="1.3" ry="1.2" fill="#ff1010" opacity="1.00"/><ellipse cx="567.2" cy="395.0" rx="4.0" ry="1.8" fill="#1fe83c" opacity="0.90"/><ellipse cx="567.2" cy="393.4" rx="2.2" ry="1.6" fill="#1fe83c" opacity="0.90"/><ellipse cx="354.8" cy="395.3" rx="9.5" ry="2.6" fill="#1fe83c" opacity="0.90"/><ellipse cx="354.8" cy="393.7" rx="5.2" ry="2.3" fill="#1fe83c" opacity="0.90"/><polygon points="346.6,379.0 349.6,378.6 354.0,392.6 351.4,393.0" fill="#e88000" stroke="#e88000" stroke-width="1.5" stroke-linejoin="round"/><polygon points="356.0,385.0 358.6,384.6 362.0,392.0 359.6,392.4" fill="#e8a000" stroke="#e8a000" stroke-width="1.5" stroke-linejoin="round"/><polygon points="351.0,381.0 353.5,380.5 357.0,391.0 355.0,391.5" fill="#e03000" stroke="#e03000" stroke-width="1.5" stroke-linejoin="round"/><polygon points="307.0,337.0 348.0,339.4 344.5,343.0 308.2,342.2" fill="#cf1800" stroke="#cf1800" stroke-width="0.7" stroke-linejoin="round"/><polygon points="318.0,343.0 332.0,343.5 326.0,346.5" fill="#f08a00" stroke="#f08a00" stroke-width="0.7" stroke-linejoin="round"/><polygon points="307.5,337.2 380.5,334.5 440.0,338.5 440.0,341.0 345.0,341.0" fill="#e0e000" stroke="#e0e000" stroke-width="0.7" stroke-linejoin="round"/><polygon points="307.5,337.2 375.0,305.5 380.5,334.5" fill="url(#gU1)" stroke="url(#gU1)" stroke-width="0.7" stroke-linejoin="round"/><polygon points="375.0,305.5 448.0,315.5 380.5,334.5" fill="url(#gU2)" stroke="url(#gU2)" stroke-width="0.7" stroke-linejoin="round"/><polygon points="375.0,305.5 441.5,297.5 448.0,315.5" fill="url(#gU3)" stroke="url(#gU3)" stroke-width="0.7" stroke-linejoin="round"/><polygon points="380.5,334.5 448.0,315.5 427.8,338.2" fill="url(#gU4)" stroke="url(#gU4)" stroke-width="0.7" stroke-linejoin="round"/><polygon points="427.8,338.2 448.0,315.5 440.0,338.5" fill="url(#gU4b)" stroke="url(#gU4b)" stroke-width="0.7" stroke-linejoin="round"/><polygon points="441.5,297.5 479.3,299.0 448.0,315.5" fill="#f3f300" stroke="#f3f300" stroke-width="0.7" stroke-linejoin="round"/><polygon points="479.3,299.0 520.7,307.0 448.0,315.5" fill="#fbfb08" stroke="#fbfb08" stroke-width="0.7" stroke-linejoin="round"/><polygon points="520.7,307.0 543.5,324.5 448.0,315.5" fill="url(#gU7)" stroke="url(#gU7)" stroke-width="0.7" stroke-linejoin="round"/><polygon points="448.0,315.5 543.5,324.5 479.3,333.2" fill="url(#gU8)" stroke="url(#gU8)" stroke-width="0.7" stroke-linejoin="round"/><polygon points="448.0,315.5 479.3,333.2 440.0,338.5" fill="url(#gU9)" stroke="url(#gU9)" stroke-width="0.7" stroke-linejoin="round"/><polygon points="479.3,299.0 539.0,290.4 520.7,307.0" fill="#f3f300" stroke="#f3f300" stroke-width="0.7" stroke-linejoin="round"/><polygon points="539.0,290.4 614.8,307.4 520.7,307.0" fill="#fbfb08" stroke="#fbfb08" stroke-width="0.7" stroke-linejoin="round"/><polygon points="539.0,290.4 548.0,282.3 616.3,284.4 614.8,307.4" fill="#f3f300" stroke="#f3f300" stroke-width="0.7" stroke-linejoin="round"/><polygon points="548.0,282.3 609.0,269.0 616.3,284.4" fill="#e9e900" stroke="#e9e900" stroke-width="0.7" stroke-linejoin="round"/><polygon points="609.0,269.0 670.4,263.0 616.3,284.4" fill="#f3f300" stroke="#f3f300" stroke-width="0.7" stroke-linejoin="round"/><polygon points="616.3,284.4 670.4,263.0 680.7,300.0" fill="#f3f300" stroke="#f3f300" stroke-width="0.7" stroke-linejoin="round"/><polygon points="670.4,263.0 716.5,255.3 755.0,270.8" fill="url(#gR1)" stroke="url(#gR1)" stroke-width="0.7" stroke-linejoin="round"/><polygon points="670.4,263.0 755.0,270.8 756.6,290.0" fill="url(#gR2)" stroke="url(#gR2)" stroke-width="0.7" stroke-linejoin="round"/><polygon points="670.4,263.0 756.6,290.0 680.7,300.0" fill="url(#gR3)" stroke="url(#gR3)" stroke-width="0.7" stroke-linejoin="round"/><polygon points="680.7,300.0 756.6,290.0 714.8,326.0" fill="#e9e900" stroke="#e9e900" stroke-width="0.7" stroke-linejoin="round"/><polygon points="680.7,300.0 714.8,326.0 614.8,307.4" fill="#f3f300" stroke="#f3f300" stroke-width="0.7" stroke-linejoin="round"/><polygon points="616.3,284.4 680.7,300.0 614.8,307.4" fill="#f3f300" stroke="#f3f300" stroke-width="0.7" stroke-linejoin="round"/><g clip-path="url(#cp1)"><ellipse cx="618.5" cy="299.0" rx="5.5" ry="9.0" transform="rotate(0.0 618.5 299.0)" fill="#40f800" opacity="0.90" filter="url(#b2_0)"/></g><polygon points="618.5,308.0 713.5,323.4 715.5,327.6 623.0,316.2" fill="#f4f412" stroke="#f4f412" stroke-width="0.7" stroke-linejoin="round"/><polygon points="749.0,290.2 757.2,290.0 758.2,294.4 719.0,329.8 712.8,324.0" fill="url(#gRb)" stroke="url(#gRb)" stroke-width="0.7" stroke-linejoin="round"/><polygon points="753.6,270.6 756.6,270.4 758.0,290.6 755.0,290.8" fill="#c4c400" stroke="#c4c400" stroke-width="0.7" stroke-linejoin="round"/><polygon points="614.8,307.4 623.0,309.5 649.5,344.5 641.5,346.0" fill="#e6e200" stroke="#e6e200" stroke-width="0.7" stroke-linejoin="round"/><line x1="622.5" y1="310.0" x2="648.5" y2="344.5" stroke="#c8aa00" stroke-width="1.20" opacity="0.60" stroke-linecap="round"/><polygon points="520.7,307.0 614.8,307.4 543.5,324.5" fill="#f3f300" stroke="#f3f300" stroke-width="0.7" stroke-linejoin="round"/><polygon points="543.5,324.5 614.8,307.4 641.5,346.0" fill="#fbfb08" stroke="#fbfb08" stroke-width="0.7" stroke-linejoin="round"/><polygon points="543.5,324.5 641.5,346.0 614.3,357.5" fill="#f3f300" stroke="#f3f300" stroke-width="0.7" stroke-linejoin="round"/><polygon points="641.5,346.0 686.7,361.0 614.3,357.5" fill="#fbfb08" stroke="#fbfb08" stroke-width="0.7" stroke-linejoin="round"/><polygon points="614.3,357.5 686.7,361.0 687.2,364.6 615.4,362.2" fill="url(#gMu)" stroke="url(#gMu)" stroke-width="0.7" stroke-linejoin="round"/><polygon points="440.0,338.5 543.5,324.5 546.0,369.3" fill="url(#gG1)" stroke="url(#gG1)" stroke-width="0.7" stroke-linejoin="round"/><g clip-path="url(#cp2)"><ellipse cx="450.0" cy="340.5" rx="20.0" ry="4.5" transform="rotate(10.0 450.0 340.5)" fill="#30fc00" opacity="0.90" filter="url(#b2_2)"/></g><polygon points="440.0,338.5 546.0,369.3 525.5,381.8" fill="url(#gG2)" stroke="url(#gG2)" stroke-width="0.7" stroke-linejoin="round"/><polygon points="543.5,324.5 614.3,357.5 546.0,369.3" fill="#f3f300" stroke="#f3f300" stroke-width="0.7" stroke-linejoin="round"/><g clip-path="url(#cp3)"><ellipse cx="553.0" cy="332.0" rx="15.0" ry="5.0" transform="rotate(26.0 553.0 332.0)" fill="#20fc00" opacity="0.95" filter="url(#b2_0)"/></g><polygon points="614.3,357.5 608.0,387.5 546.0,369.3" fill="#fbfb08" stroke="#fbfb08" stroke-width="0.7" stroke-linejoin="round"/><polygon points="608.0,387.5 525.5,381.8 546.0,369.3" fill="url(#gG5)" stroke="url(#gG5)" stroke-width="0.7" stroke-linejoin="round"/><polygon points="524.5,381.6 608.0,386.3 608.8,390.2 528.0,387.9" fill="url(#gGf)" stroke="url(#gGf)" stroke-width="0.7" stroke-linejoin="round"/><polygon points="613.3,357.5 617.2,358.8 611.4,388.4 607.4,387.4" fill="#78d410" stroke="#78d410" stroke-width="0.7" stroke-linejoin="round"/><polygon points="283.7,368.5 354.0,339.6 355.8,364.5" fill="url(#gF1)" stroke="url(#gF1)" stroke-width="0.7" stroke-linejoin="round"/><polygon points="283.7,368.5 355.8,364.5 350.0,370.7 349.0,372.0 284.0,371.0" fill="#dede00" stroke="#dede00" stroke-width="0.7" stroke-linejoin="round"/><polygon points="354.0,339.6 440.0,338.5 355.8,364.5" fill="url(#gF3)" stroke="url(#gF3)" stroke-width="0.7" stroke-linejoin="round"/><polygon points="355.8,364.5 440.0,338.5 437.5,388.8 350.0,370.7" fill="#e9e900" stroke="#e9e900" stroke-width="0.7" stroke-linejoin="round"/><polygon points="440.0,338.5 525.5,381.8 437.5,388.8" fill="url(#gF5)" stroke="url(#gF5)" stroke-width="0.7" stroke-linejoin="round"/><g clip-path="url(#cp4)"><ellipse cx="488.0" cy="364.2" rx="20.0" ry="2.2" transform="rotate(26.6 488.0 364.2)" fill="#ff2800" opacity="1.00" filter="url(#b1_0)"/></g><g clip-path="url(#cp5)"><ellipse cx="490.0" cy="365.4" rx="32.0" ry="2.6" transform="rotate(26.6 490.0 365.4)" fill="#ff7000" opacity="0.80" filter="url(#b1_6)"/></g><polygon points="525.5,381.8 483.0,408.8 437.5,388.8" fill="#f3f300" stroke="#f3f300" stroke-width="0.7" stroke-linejoin="round"/><polygon points="483.0,408.8 398.0,414.0 437.5,388.8" fill="url(#gF7)" stroke="url(#gF7)" stroke-width="0.7" stroke-linejoin="round"/><polygon points="398.0,414.0 350.0,370.7 437.5,388.8" fill="url(#gF8)" stroke="url(#gF8)" stroke-width="0.7" stroke-linejoin="round"/><g clip-path="url(#cp6)"><ellipse cx="454.0" cy="398.2" rx="11.0" ry="2.0" transform="rotate(21.6 454.0 398.2)" fill="#ff3800" opacity="1.00" filter="url(#b1_0)"/></g><g clip-path="url(#cp7)"><ellipse cx="455.0" cy="399.0" rx="16.0" ry="3.0" transform="rotate(21.6 455.0 399.0)" fill="#ff9000" opacity="0.70" filter="url(#b1_6)"/></g><polygon points="483.0,408.8 523.7,383.0 528.6,386.0 503.8,407.6" fill="url(#gFu)" stroke="url(#gFu)" stroke-width="0.7" stroke-linejoin="round"/><polygon points="398.0,412.2 483.0,407.6 483.2,410.6 398.8,417.6" fill="url(#gFf)" stroke="url(#gFf)" stroke-width="0.7" stroke-linejoin="round"/><polygon points="283.0,368.4 350.6,370.0 350.0,375.3 284.4,374.3" fill="#cf1800" stroke="#cf1800" stroke-width="0.7" stroke-linejoin="round"/><polygon points="350.6,370.0 399.2,412.4 397.6,417.6 349.4,375.6" fill="#cf1800" stroke="#cf1800" stroke-width="0.7" stroke-linejoin="round"/><line x1="352.0" y1="370.2" x2="399.0" y2="411.6" stroke="#40c840" stroke-width="1.30" opacity="0.85" stroke-linecap="round"/><line x1="284.0" y1="368.2" x2="350.0" y2="369.8" stroke="#90c020" stroke-width="0.90" opacity="0.80" stroke-linecap="round"/><line x1="375.0" y1="305.5" x2="380.5" y2="334.5" stroke="#c8aa00" stroke-width="1.90" opacity="0.60" stroke-linecap="round"/><line x1="380.5" y1="334.5" x2="448.0" y2="315.5" stroke="#c8aa00" stroke-width="1.90" opacity="0.60" stroke-linecap="round"/><line x1="441.5" y1="297.5" x2="448.0" y2="315.5" stroke="#c8aa00" stroke-width="1.90" opacity="0.60" stroke-linecap="round"/><line x1="479.3" y1="299.0" x2="448.0" y2="315.5" stroke="#c8aa00" stroke-width="1.90" opacity="0.60" stroke-linecap="round"/><line x1="520.7" y1="307.0" x2="448.0" y2="315.5" stroke="#c8aa00" stroke-width="1.90" opacity="0.60" stroke-linecap="round"/><line x1="479.3" y1="299.0" x2="520.7" y2="307.0" stroke="#c8aa00" stroke-width="1.90" opacity="0.60" stroke-linecap="round"/><line x1="539.0" y1="290.4" x2="520.7" y2="307.0" stroke="#c8aa00" stroke-width="1.90" opacity="0.60" stroke-linecap="round"/><line x1="539.0" y1="290.4" x2="614.8" y2="307.4" stroke="#c8aa00" stroke-width="1.90" opacity="0.60" stroke-linecap="round"/><line x1="520.7" y1="307.0" x2="614.8" y2="307.4" stroke="#c8aa00" stroke-width="1.90" opacity="0.60" stroke-linecap="round"/><line x1="520.7" y1="307.0" x2="543.5" y2="324.5" stroke="#c8aa00" stroke-width="1.90" opacity="0.60" stroke-linecap="round"/><line x1="543.5" y1="324.5" x2="614.8" y2="307.4" stroke="#c8aa00" stroke-width="1.90" opacity="0.60" stroke-linecap="round"/><line x1="543.5" y1="324.5" x2="641.5" y2="346.0" stroke="#c8aa00" stroke-width="1.90" opacity="0.60" stroke-linecap="round"/><line x1="614.8" y1="307.4" x2="641.5" y2="346.0" stroke="#c8aa00" stroke-width="1.90" opacity="0.60" stroke-linecap="round"/><line x1="548.0" y1="282.3" x2="598.0" y2="285.6" stroke="#c8aa00" stroke-width="1.90" opacity="0.60" stroke-linecap="round"/><line x1="609.0" y1="269.0" x2="598.0" y2="285.6" stroke="#c8aa00" stroke-width="1.90" opacity="0.60" stroke-linecap="round"/><line x1="539.0" y1="290.4" x2="598.0" y2="285.6" stroke="#c8aa00" stroke-width="1.90" opacity="0.60" stroke-linecap="round"/><line x1="598.0" y1="285.6" x2="616.3" y2="284.4" stroke="#c8aa00" stroke-width="1.90" opacity="0.60" stroke-linecap="round"/><line x1="598.0" y1="285.6" x2="657.0" y2="264.6" stroke="#c8aa00" stroke-width="1.90" opacity="0.60" stroke-linecap="round"/><line x1="616.3" y1="284.4" x2="670.4" y2="263.0" stroke="#c8aa00" stroke-width="1.90" opacity="0.60" stroke-linecap="round"/><line x1="616.3" y1="284.4" x2="680.7" y2="300.0" stroke="#c8aa00" stroke-width="1.90" opacity="0.60" stroke-linecap="round"/><line x1="614.8" y1="307.4" x2="680.7" y2="300.0" stroke="#c8aa00" stroke-width="1.90" opacity="0.60" stroke-linecap="round"/><line x1="680.7" y1="300.0" x2="756.6" y2="290.0" stroke="#c8aa00" stroke-width="1.90" opacity="0.60" stroke-linecap="round"/><line x1="680.7" y1="300.0" x2="714.8" y2="326.0" stroke="#c8aa00" stroke-width="1.90" opacity="0.60" stroke-linecap="round"/><line x1="543.5" y1="324.5" x2="546.0" y2="369.3" stroke="#c8aa00" stroke-width="1.90" opacity="0.60" stroke-linecap="round"/><line x1="546.0" y1="369.3" x2="614.3" y2="357.5" stroke="#c8aa00" stroke-width="1.90" opacity="0.60" stroke-linecap="round"/><line x1="546.0" y1="369.3" x2="608.0" y2="387.5" stroke="#c8aa00" stroke-width="1.90" opacity="0.60" stroke-linecap="round"/><line x1="543.5" y1="324.5" x2="614.3" y2="357.5" stroke="#c8aa00" stroke-width="1.90" opacity="0.60" stroke-linecap="round"/><line x1="641.5" y1="346.0" x2="614.3" y2="357.5" stroke="#c8aa00" stroke-width="1.90" opacity="0.60" stroke-linecap="round"/><line x1="355.8" y1="364.5" x2="440.0" y2="338.5" stroke="#c8aa00" stroke-width="1.90" opacity="0.60" stroke-linecap="round"/><line x1="440.0" y1="338.5" x2="437.5" y2="388.8" stroke="#c8aa00" stroke-width="1.90" opacity="0.60" stroke-linecap="round"/><line x1="350.0" y1="370.7" x2="437.5" y2="388.8" stroke="#c8aa00" stroke-width="1.90" opacity="0.60" stroke-linecap="round"/><line x1="355.8" y1="364.5" x2="350.0" y2="370.7" stroke="#c8aa00" stroke-width="1.90" opacity="0.60" stroke-linecap="round"/><line x1="437.5" y1="388.8" x2="483.0" y2="408.8" stroke="#c8aa00" stroke-width="1.90" opacity="0.60" stroke-linecap="round"/><line x1="437.5" y1="388.8" x2="525.5" y2="381.8" stroke="#c8aa00" stroke-width="1.90" opacity="0.60" stroke-linecap="round"/><line x1="437.5" y1="388.8" x2="398.0" y2="414.0" stroke="#c8aa00" stroke-width="1.90" opacity="0.60" stroke-linecap="round"/><line x1="354.0" y1="339.6" x2="355.8" y2="364.5" stroke="#c8aa00" stroke-width="1.90" opacity="0.60" stroke-linecap="round"/><line x1="283.7" y1="368.5" x2="355.8" y2="364.5" stroke="#c8aa00" stroke-width="1.90" opacity="0.60" stroke-linecap="round"/><line x1="716.5" y1="255.3" x2="755.0" y2="270.8" stroke="#c8aa00" stroke-width="1.90" opacity="0.60" stroke-linecap="round"/><line x1="755.0" y1="270.8" x2="756.6" y2="290.0" stroke="#c8aa00" stroke-width="1.90" opacity="0.60" stroke-linecap="round"/><line x1="670.4" y1="263.0" x2="755.0" y2="270.8" stroke="#c8aa00" stroke-width="1.90" opacity="0.60" stroke-linecap="round"/><line x1="546.0" y1="369.3" x2="525.5" y2="381.8" stroke="#c8aa00" stroke-width="1.90" opacity="0.60" stroke-linecap="round"/><line x1="375.0" y1="305.5" x2="448.0" y2="315.5" stroke="#58c030" stroke-width="1.70" opacity="0.75" stroke-linecap="round"/><line x1="448.0" y1="315.5" x2="543.5" y2="324.5" stroke="#58c030" stroke-width="1.70" opacity="0.75" stroke-linecap="round"/><line x1="448.0" y1="315.5" x2="479.3" y2="333.2" stroke="#58c030" stroke-width="1.70" opacity="0.75" stroke-linecap="round"/><line x1="448.0" y1="315.5" x2="427.8" y2="338.2" stroke="#58c030" stroke-width="1.70" opacity="0.75" stroke-linecap="round"/><line x1="440.0" y1="338.5" x2="543.5" y2="324.5" stroke="#58c030" stroke-width="1.70" opacity="0.75" stroke-linecap="round"/><line x1="440.0" y1="338.5" x2="546.0" y2="369.3" stroke="#58c030" stroke-width="1.70" opacity="0.75" stroke-linecap="round"/><line x1="670.4" y1="263.0" x2="680.7" y2="300.0" stroke="#58c030" stroke-width="1.70" opacity="0.75" stroke-linecap="round"/><line x1="670.4" y1="263.0" x2="756.6" y2="290.0" stroke="#58c030" stroke-width="1.70" opacity="0.75" stroke-linecap="round"/><line x1="616.3" y1="284.4" x2="614.8" y2="307.4" stroke="#58c030" stroke-width="1.70" opacity="0.75" stroke-linecap="round"/><line x1="307.5" y1="337.2" x2="440.0" y2="338.5" stroke="#58c030" stroke-width="1.70" opacity="0.75" stroke-linecap="round"/><line x1="440.0" y1="338.5" x2="525.5" y2="381.8" stroke="#58c030" stroke-width="1.70" opacity="0.75" stroke-linecap="round"/><line x1="749.0" y1="290.2" x2="712.8" y2="324.0" stroke="#c8aa00" stroke-width="1.90" opacity="0.60" stroke-linecap="round"/><line x1="307.5" y1="337.2" x2="375.0" y2="305.5" stroke="#c8b000" stroke-width="0.90" opacity="0.60" stroke-linecap="round"/><line x1="375.0" y1="305.5" x2="441.5" y2="297.5" stroke="#c8b000" stroke-width="0.90" opacity="0.60" stroke-linecap="round"/><line x1="441.5" y1="297.5" x2="479.3" y2="299.0" stroke="#c8b000" stroke-width="0.90" opacity="0.60" stroke-linecap="round"/><line x1="479.3" y1="299.0" x2="539.0" y2="290.4" stroke="#c8b000" stroke-width="0.90" opacity="0.60" stroke-linecap="round"/><line x1="539.0" y1="290.4" x2="548.0" y2="282.3" stroke="#c8b000" stroke-width="0.90" opacity="0.60" stroke-linecap="round"/><line x1="548.0" y1="282.3" x2="609.0" y2="269.0" stroke="#c8b000" stroke-width="0.90" opacity="0.60" stroke-linecap="round"/><line x1="609.0" y1="269.0" x2="670.4" y2="263.0" stroke="#c8b000" stroke-width="0.90" opacity="0.60" stroke-linecap="round"/><line x1="670.4" y1="263.0" x2="716.5" y2="255.3" stroke="#c8b000" stroke-width="0.90" opacity="0.60" stroke-linecap="round"/><line x1="283.7" y1="368.5" x2="354.0" y2="339.6" stroke="#c8b000" stroke-width="0.90" opacity="0.60" stroke-linecap="round"/><ellipse cx="333.5" cy="428.7" rx="10.0" ry="3.0" fill="#1fe83c" opacity="0.90"/><ellipse cx="333.5" cy="427.1" rx="5.5" ry="2.7" fill="#1fe83c" opacity="0.90"/><ellipse cx="341.0" cy="428.2" rx="5.0" ry="2.4" fill="#1fe83c" opacity="0.90"/><ellipse cx="341.0" cy="426.6" rx="2.8" ry="2.2" fill="#1fe83c" opacity="0.90"/><polygon points="286.0,374.2 308.0,375.6 320.5,383.8 317.5,386.0" fill="url(#gl1w)" /><line x1="321.0" y1="382.2" x2="338.0" y2="378.2" stroke="#8890e0" stroke-width="1.20" opacity="0.80" stroke-linecap="round"/><line x1="326.0" y1="380.4" x2="331.0" y2="376.6" stroke="#8890e0" stroke-width="1.00" opacity="0.70" stroke-linecap="round"/><polygon points="340.5,379.1 346.6,377.6 345.4,393.2 341.6,424.3 332.4,425.2 337.7,402.6" fill="url(#gl1b)" /><line x1="338.4" y1="407.0" x2="336.4" y2="419.0" stroke="#ffffff" stroke-width="1.00" opacity="0.90" stroke-linecap="round"/><polygon points="316.8,384.0 324.0,384.6 327.0,381.6 345.4,376.4 346.0,378.5 338.5,396.0 331.6,425.2 327.2,425.2 322.5,404.0 317.6,388.5" fill="#cf1800" /><ellipse cx="329.3" cy="398.6" rx="2.5" ry="4.3" fill="#ffffff" opacity="1.00"/><polygon points="322.4,394.0 325.4,396.2 328.2,411.0 327.4,419.0" fill="#d8a400" /><line x1="344.6" y1="379.4" x2="332.0" y2="424.0" stroke="#58b868" stroke-width="1.00" opacity="0.85" stroke-linecap="round"/><ellipse cx="325.6" cy="385.6" rx="2.5" ry="2.1" fill="#30e848" opacity="1.00"/><ellipse cx="336.6" cy="423.6" rx="1.2" ry="1.2" fill="#ff1808" opacity="1.00"/><ellipse cx="329.0" cy="424.4" rx="1.2" ry="1.2" fill="#ff1808" opacity="1.00"/><ellipse cx="347.6" cy="390.0" rx="1.2" ry="1.2" fill="#ff1808" opacity="1.00"/><ellipse cx="353.2" cy="392.8" rx="1.2" ry="1.2" fill="#ff1808" opacity="1.00"/><polygon points="351.0,377.2 355.6,384.8 373.4,401.6 378.5,401.2" fill="#c41500" /><ellipse cx="396.8" cy="460.9" rx="9.5" ry="3.0" fill="#1fe83c" opacity="0.90"/><ellipse cx="396.8" cy="459.3" rx="5.2" ry="2.7" fill="#1fe83c" opacity="0.90"/><ellipse cx="403.4" cy="460.3" rx="4.6" ry="2.3" fill="#1fe83c" opacity="0.90"/><ellipse cx="403.4" cy="458.7" rx="2.5" ry="2.1" fill="#1fe83c" opacity="0.90"/><polygon points="398.5,418.3 409.2,418.3 404.6,432.6 404.2,458.0 400.2,458.0 400.4,432.6" fill="url(#gl2b)" /><polygon points="383.0,421.5 397.0,431.5 387.0,438.0" fill="#ecc400" /><polygon points="396.3,431.6 399.6,433.0 393.8,457.6 391.2,457.6" fill="#d8bc00" /><polygon points="376.0,410.5 382.8,421.0 386.8,437.0 393.0,457.6 388.8,458.0 383.2,442.0 378.2,424.0" fill="url(#gl2a)" /><polygon points="372.3,400.6 375.0,397.0 399.6,417.5 399.6,433.2 385.2,421.2 380.6,421.8" fill="#cf1800" /><ellipse cx="391.4" cy="427.6" rx="1.6" ry="1.9" fill="#ffffff" opacity="1.00"/><polygon points="389.4,416.2 396.4,421.0 393.2,422.2" fill="#a8c8b0" /><line x1="385.5" y1="436.8" x2="398.5" y2="436.0" stroke="#8890e0" stroke-width="1.10" opacity="0.85" stroke-linecap="round"/><ellipse cx="392.4" cy="457.0" rx="1.2" ry="1.2" fill="#ff1808" opacity="1.00"/><ellipse cx="401.6" cy="457.0" rx="1.2" ry="1.2" fill="#ff1808" opacity="1.00"/><ellipse cx="401.0" cy="434.0" rx="1.2" ry="1.2" fill="#ff1808" opacity="1.00"/><ellipse cx="374.6" cy="402.0" rx="1.2" ry="1.2" fill="#ff1808" opacity="1.00"/><ellipse cx="483.0" cy="408.9" rx="1.6" ry="1.6" fill="#f01010" opacity="1.00"/><ellipse cx="608.0" cy="387.6" rx="1.6" ry="1.6" fill="#f01010" opacity="1.00"/><ellipse cx="714.8" cy="326.2" rx="1.5" ry="1.5" fill="#f01010" opacity="1.00"/><ellipse cx="686.9" cy="362.4" rx="1.2" ry="1.6" fill="#f01010" opacity="1.00"/><ellipse cx="398.6" cy="414.6" rx="1.8" ry="1.8" fill="#e81000" opacity="1.00"/><ellipse cx="757.6" cy="292.0" rx="0.9" ry="1.1" fill="#f04010" opacity="1.00"/><ellipse cx="626.5" cy="371.0" rx="0.9" ry="0.9" fill="#ff2010" opacity="0.90"/><ellipse cx="657.0" cy="376.5" rx="0.9" ry="0.9" fill="#ff2010" opacity="0.90"/><ellipse cx="650.5" cy="330.5" rx="0.9" ry="0.9" fill="#ff2010" opacity="0.90"/><ellipse cx="688.5" cy="339.0" rx="0.9" ry="0.9" fill="#ff2010" opacity="0.90"/><ellipse cx="660.0" cy="350.0" rx="0.9" ry="0.9" fill="#ff2010" opacity="0.90"/><ellipse cx="717.0" cy="329.0" rx="0.9" ry="0.9" fill="#ff2010" opacity="0.90"/><ellipse cx="741.0" cy="313.0" rx="0.9" ry="0.9" fill="#ff2010" opacity="0.90"/><ellipse cx="735.0" cy="337.0" rx="0.9" ry="0.9" fill="#ff2010" opacity="0.90"/><ellipse cx="650.0" cy="394.0" rx="0.9" ry="0.9" fill="#ff2010" opacity="0.90"/><ellipse cx="640.0" cy="396.0" rx="0.9" ry="0.9" fill="#ff2010" opacity="0.90"/><ellipse cx="576.0" cy="395.0" rx="0.9" ry="0.9" fill="#ff2010" opacity="0.90"/><ellipse cx="600.0" cy="412.0" rx="0.9" ry="0.9" fill="#ff2010" opacity="0.90"/><ellipse cx="583.0" cy="420.0" rx="0.9" ry="0.9" fill="#ff2010" opacity="0.90"/><ellipse cx="476.0" cy="432.0" rx="0.9" ry="0.9" fill="#ff2010" opacity="0.90"/><ellipse cx="492.0" cy="430.0" rx="0.9" ry="0.9" fill="#ff2010" opacity="0.90"/><ellipse cx="647.0" cy="414.0" rx="0.9" ry="0.9" fill="#ff2010" opacity="0.90"/><ellipse cx="652.0" cy="413.0" rx="0.9" ry="0.9" fill="#ff2010" opacity="0.90"/><ellipse cx="678.0" cy="381.0" rx="0.9" ry="0.9" fill="#ff2010" opacity="0.90"/><ellipse cx="672.0" cy="381.0" rx="0.9" ry="0.9" fill="#ff2010" opacity="0.90"/><ellipse cx="724.0" cy="355.0" rx="0.9" ry="0.9" fill="#ff2010" opacity="0.90"/><ellipse cx="732.0" cy="353.0" rx="0.9" ry="0.9" fill="#ff2010" opacity="0.90"/><ellipse cx="339.0" cy="421.0" rx="0.9" ry="0.9" fill="#ff2010" opacity="0.90"/><ellipse cx="329.0" cy="423.0" rx="0.9" ry="0.9" fill="#ff2010" opacity="0.90"/><ellipse cx="402.0" cy="456.0" rx="0.9" ry="0.9" fill="#ff2010" opacity="0.90"/><ellipse cx="391.0" cy="456.0" rx="0.9" ry="0.9" fill="#ff2010" opacity="0.90"/></g>
<line x1="293.9" y1="360.0" x2="293.7" y2="380.0" stroke="#4f95b7" stroke-width="1.0" stroke-dasharray="10.2 3.3" opacity="0.55"/>
</svg>
<div id="panel"><div id="wrap">
<div id="title"><span>控制面板</span><div id="close">x</div></div>
<div id="head">表面变量<br><span class="u">p [kN/m<sup>2</sup>]</span></div>
<div id="gray"></div>
<div class="bar" style="top:82.70px;background:#b90000"></div>
<div class="bar" style="top:105.12px;background:#ff0000"></div>
<div class="bar" style="top:127.54px;background:#ffa800"></div>
<div class="bar" style="top:149.96px;background:#d2d200"></div>
<div class="bar" style="top:172.38px;background:#ffff00"></div>
<div class="bar" style="top:194.80px;background:#00ff00"></div>
<div class="bar" style="top:217.22px;background:#00dc82"></div>
<div class="bar" style="top:239.64px;background:#00f0f0"></div>
<div class="bar" style="top:262.06px;background:#0096ff"></div>
<div class="bar" style="top:284.48px;background:#0000ff"></div>
<div class="bar" style="top:306.90px;background:#0000a0"></div>
<div class="lab" style="top:76.10px">0.891</div>
<div class="lab" style="top:98.52px">0.686</div>
<div class="lab" style="top:120.94px">0.481</div>
<div class="lab" style="top:143.36px">0.276</div>
<div class="lab" style="top:165.78px">0.071</div>
<div class="lab" style="top:188.20px">-0.134</div>
<div class="lab" style="top:210.62px">-0.339</div>
<div class="lab" style="top:233.04px">-0.544</div>
<div class="lab" style="top:255.46px">-0.749</div>
<div class="lab" style="top:277.88px">-0.954</div>
<div class="lab" style="top:300.30px">-1.159</div>
<div class="lab" style="top:322.72px">-1.364</div>
<div id="track"></div>
<div class="thumb" style="top:75.8px"></div><div class="thumb" style="top:324.9px"></div>

<div class="btn" style="left:160px;width:22px;"></div>
<div class="btn" style="left:187px;width:23px;border:1px solid #3c82c0;border-radius:1.5px;"></div>
<svg style="position:absolute;left:159.6px;top:389.3px" width="51" height="20" viewBox="0 0 51 20">
 <rect x="4.6" y="7.2" width="8.8" height="8.6" rx="0.8" fill="#f4f4f4" stroke="#555" stroke-width="1"/>
 <rect x="5.2" y="7.6" width="7.6" height="1.7" fill="#4a66b8"/>
 <path d="M6 7 Q7 4.2 10.4 4.4 Q13.6 4.4 14.2 7.6 Q13 9.8 11 9.4 Q9.6 7.6 6 7Z" fill="#d8b896" stroke="#b09070" stroke-width="0.4"/>
 <path d="M13.6 3.2 Q16.8 2.4 17 6.6 Q16.4 8.4 15 7.4 Z" fill="#5b7fd0"/>
 <line x1="13.2" y1="3" x2="16.8" y2="2.6" stroke="#4a86c8" stroke-width="0.7"/>
 <rect x="32.6" y="2.8" width="3.4" height="14" fill="#d8d8d8"/>
 <rect x="32.8" y="2.8" width="3" height="2.6" fill="#0000b0"/>
 <rect x="32.6" y="5.2" width="3.4" height="1.6" fill="#2080f0"/>
 <rect x="32.6" y="11.8" width="3.4" height="1.4" fill="#40a0e8"/>
 <rect x="32.6" y="13.2" width="3.4" height="1.6" fill="#f0a000"/>
 <rect x="32.8" y="14.8" width="3" height="2" fill="#e00000"/>
 <rect x="40.2" y="2.8" width="3.6" height="14" fill="#d0d0d0"/>
 <rect x="40.2" y="5.6" width="3.6" height="1.4" fill="#60b8e8"/>
 <rect x="40.6" y="7" width="2.8" height="2.6" fill="#00e0a0"/>
 <rect x="40.6" y="9.6" width="2.8" height="2.8" fill="#20f020"/>
 <rect x="40.2" y="12.4" width="3.6" height="1.4" fill="#90c8e0"/>
</svg>
<div id="tabbar"></div>
<svg style="position:absolute;left:9px;top:418px" width="18" height="16" viewBox="0 0 18 16">
 <rect x="1.4" y="0.6" width="2.6" height="1.6" fill="#b00000"/><rect x="5" y="1.2" width="1.4" height="0.7" fill="#888"/>
 <rect x="1.4" y="3.2" width="2.6" height="1.6" fill="#ffa800"/><rect x="5" y="3.8" width="1.4" height="0.7" fill="#555"/>
 <rect x="1.4" y="5.8" width="2.6" height="1.8" fill="#00f000"/><rect x="5" y="6.5" width="1.4" height="0.7" fill="#555"/>
 <rect x="1.4" y="8.6" width="2.6" height="1.6" fill="#0096ff"/><rect x="5" y="9.2" width="1.4" height="0.7" fill="#888"/>
 <rect x="1.4" y="11.2" width="2.6" height="1.8" fill="#0000a0"/><rect x="5" y="11.9" width="1.4" height="0.7" fill="#555"/>
 <defs><linearGradient id="icg" x1="0" y1="0" x2="1" y2="1"><stop offset="0" stop-color="#4060ff"/><stop offset="0.35" stop-color="#20d8c0"/><stop offset="0.6" stop-color="#b0e820"/><stop offset="0.8" stop-color="#ffa000"/><stop offset="1" stop-color="#e02000"/></linearGradient></defs>
 <path d="M6.6 7.6 Q9.4 4.2 14.6 5.4 L13 10.4 Q9.6 8.6 6.6 7.6Z" fill="url(#icg)"/>
</svg>

</div></div>
</body></html>
